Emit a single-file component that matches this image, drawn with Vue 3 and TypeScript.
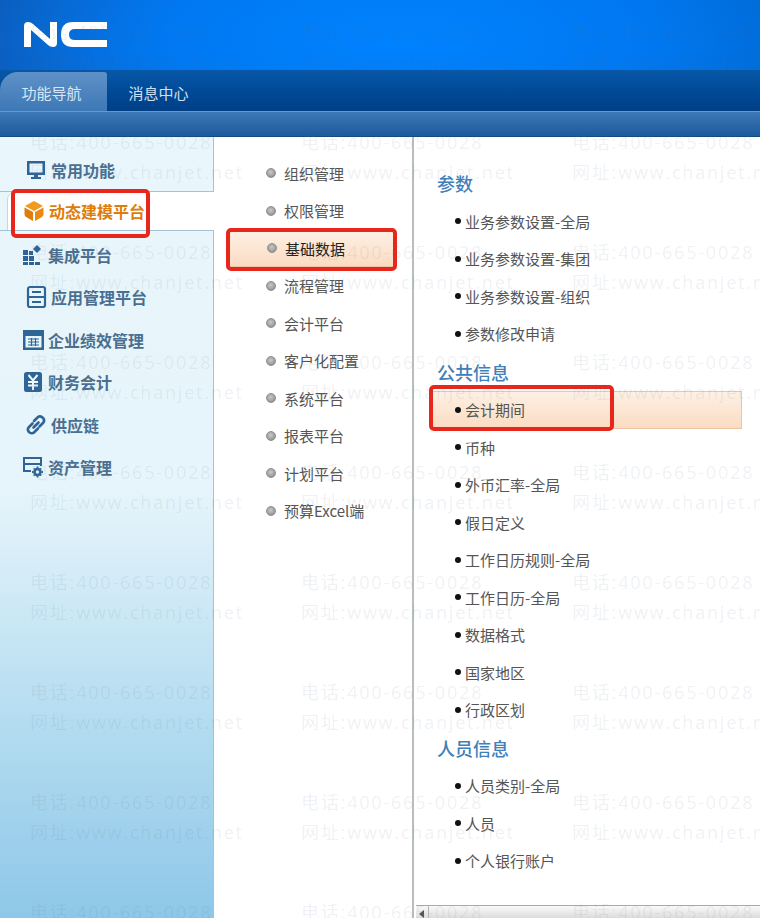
<script setup lang="ts">
interface SideItem {
  label: string
  icon: string
  active?: boolean
}

interface Group {
  title: string
  items: string[]
}

const sideItems: SideItem[] = [
  { label: '常用功能', icon: 'monitor' },
  { label: '动态建模平台', icon: 'cube', active: true },
  { label: '集成平台', icon: 'blocks' },
  { label: '应用管理平台', icon: 'server' },
  { label: '企业绩效管理', icon: 'calc' },
  { label: '财务会计', icon: 'yen' },
  { label: '供应链', icon: 'link' },
  { label: '资产管理', icon: 'asset' },
]

const midItems = ['组织管理', '权限管理', '基础数据', '流程管理', '会计平台', '客户化配置', '系统平台', '报表平台', '计划平台', '预算Excel端']

const groups: Group[] = [
  { title: '参数', items: ['业务参数设置-全局', '业务参数设置-集团', '业务参数设置-组织', '参数修改申请'] },
  {
    title: '公共信息',
    items: ['会计期间', '币种', '外币汇率-全局', '假日定义', '工作日历规则-全局', '工作日历-全局', '数据格式', '国家地区', '行政区划'],
  },
  { title: '人员信息', items: ['人员类别-全局', '人员', '个人银行账户'] },
]

const marks: number[] = [0, 1, 2, 3, 4, 5, 6, 7, 8]
const markCols: number[] = [0, 1, 2]
</script>

<template>
  <div class="page">
    <header class="top">
      <svg class="logo" width="84" height="28" viewBox="0 0 84 28">
        <path d="M1 27V6Q1 2 5 2Q8 2 10 4L27 19V2H34V23Q34 27 30 27Q27 27 25 25L8 10V27Z" fill="#fff" />
        <path d="M84 2H50Q38 2 38 14.500Q38 27 50 27H84V20H52Q46 20 46 14.500Q46 9 52 9H84Z" fill="#fff" />
      </svg>
    </header>

    <nav class="tabs">
      <div class="tab on">功能导航</div>
      <div class="tab">消息中心</div>
    </nav>
    <div class="subbar"></div>

    <main class="body">
      <aside class="side">
        <div v-for="item in sideItems" :key="item.label" class="side-item" :class="[item.icon, { active: item.active }]">
          <svg class="ico" width="24" height="24" viewBox="0 0 24 24">
            <g v-if="item.icon === 'monitor'" fill="#2f6596">
              <path d="M3 3H21V17H14V19H17V21H7V19H10V17H3ZM5.500 5.500V14.500H18.500V5.500Z" fill-rule="evenodd" />
            </g>
            <g v-else-if="item.icon === 'cube'">
              <path d="M12 2L21 7L12 12L3 7Z" fill="#f09a20" />
              <path d="M2.500 8.500L11 13V22L4 18Q2.500 17 2.500 15Z" fill="#dd7d0c" />
              <path d="M21.500 8.500L13 13V22L20 18Q21.500 17 21.500 15Z" fill="#e88a14" />
            </g>
            <g v-else-if="item.icon === 'blocks'" fill="#2f6596">
              <rect x="2" y="7" width="5" height="5" />
              <rect x="2" y="13" width="5" height="5" />
              <rect x="2" y="19" width="5" height="3" />
              <rect x="8" y="13" width="5" height="5" />
              <rect x="8" y="19" width="5" height="3" />
              <rect x="14" y="19" width="5" height="3" />
              <rect x="8" y="8" width="4" height="4" />
              <path d="M16 2L20 6L16 10L12 6Z" />
            </g>
            <g v-else-if="item.icon === 'server'" fill="none" stroke="#2f6596" stroke-width="2.200">
              <rect x="4" y="2" width="17" height="20" rx="2" />
              <path d="M4 12H21M8 7H17M8 17H17" />
            </g>
            <g v-else-if="item.icon === 'calc'">
              <path d="M2 2H23V22H2ZM4.500 8V19.500H20.500V8Z" fill="#2f6596" fill-rule="evenodd" />
              <path d="M7 11H18M7 14H18M7 17H18M10.500 10V18M14.500 10V18" stroke="#2f6596" stroke-width="1.200" />
            </g>
            <g v-else-if="item.icon === 'yen'">
              <rect x="3" y="2" width="18" height="20" rx="2.500" fill="#2f6596" />
              <path d="M7.500 5L12 10.500L16.500 5M7 12H17M7 15.500H17M12 10.500V20" fill="none" stroke="#eef8fd" stroke-width="2" />
            </g>
            <g v-else-if="item.icon === 'link'" fill="none" stroke="#2f6596" stroke-width="2.600" stroke-linecap="round">
              <path d="M10 8L14 4Q16 2.500 18.500 4.500L19.500 5.500Q21 8 19 10L15.500 13.500" />
              <path d="M14 15.500L10 19.500Q8 21 5.500 19.500L4.500 18.500Q3 16 5 14L8.500 10.500" />
              <path d="M9.500 14.500L14.500 9.500" />
            </g>
            <g v-else fill="none" stroke="#2f6596" stroke-width="2">
              <path d="M10 16H3V3H20V11M3 9H20" />
              <circle cx="16.500" cy="17" r="3" stroke-width="2.600" />
              <path d="M16.500 11.500V13M16.500 21V22.500M11 17H12.500M20.500 17H22M12.800 13.300L13.800 14.300M19.200 19.700L20.200 20.700M20.200 13.300L19.200 14.300M13.800 19.700L12.800 20.700" stroke-width="1.800" />
            </g>
          </svg>
          <span class="side-label">{{ item.label }}</span>
          <i v-if="item.active" class="note note-side"></i>
        </div>
      </aside>

      <section class="mid">
        <div v-for="(name, idx) in midItems" :key="name" class="mid-item" :class="{ active: idx === 2 }">
          <span class="dot"></span>
          <span>{{ name }}</span>
          <i v-if="idx === 2" class="note note-mid"></i>
        </div>
      </section>

      <section class="detail">
        <div v-for="group in groups" :key="group.title" class="group">
          <h3>{{ group.title }}</h3>
          <div v-for="name in group.items" :key="name" class="leaf" :class="{ active: name === '会计期间' }">
            <span class="bullet"></span>
            <span>{{ name }}</span>
            <i v-if="name === '会计期间'" class="note note-leaf"></i>
          </div>
        </div>
        <div class="hscroll"><span class="arrow"></span><span class="thumb"></span></div>
      </section>
    </main>

    <div class="marks">
      <template v-for="row in marks" :key="row">
        <div class="mark-row" :style="{ top: `${row * 110 + 17}px` }">
          <div v-for="col in markCols" :key="col" class="mark">
            <div>电话:400-665-0028</div>
            <div>网址:www.chanjet.net</div>
          </div>
        </div>
      </template>
    </div>
  </div>
</template>

<style scoped>
.page {
  position: relative;
  width: 760px;
  height: 918px;
  overflow: hidden;
  display: flex;
  flex-direction: column;
  background: #fff;
  font-family: "Noto Sans CJK SC", "Liberation Sans", sans-serif;
}

.top {
  height: 70px;
  flex: none;
  box-sizing: border-box;
  padding: 20px 0 0 23px;
  background: radial-gradient(ellipse 420px 150px at 400px 40px, #0082ff 0%, #0079f2 55%, rgba(0, 110, 225, 0) 100%), linear-gradient(90deg, #0b5dbd 0%, #0a66cf 25%, #0072e6 55%, #0068d2 100%);
}

.logo {
  display: block;
}

.tabs {
  height: 41px;
  flex: none;
  box-sizing: border-box;
  padding-top: 2px;
  display: flex;
  background: linear-gradient(180deg, #0858a8 0%, #004a98 50%, #003f86 100%);
}

.tab {
  width: 107px;
  display: flex;
  align-items: center;
  justify-content: center;
  font-size: 15px;
  color: #cfe0f2;
  box-sizing: border-box;
  padding-right: 4px;
  padding-top: 2px;
}

.tab.on {
  background: linear-gradient(180deg, #5f91c8 0%, #3d78b6 100%);
  border-top-left-radius: 18px;
  border-top-right-radius: 3px;
  color: #d8e6f5;
}

.subbar {
  height: 26px;
  flex: none;
  border-top: 1px solid #6a97c6;
  box-sizing: border-box;
  background: linear-gradient(180deg, #3d78b6 0%, #1c5a9c 100%);
  border-bottom: 1px solid #144a84;
}

.body {
  flex: 1;
  min-height: 0;
  display: flex;
}

.side {
  width: 214px;
  flex: none;
  box-sizing: border-box;
  padding-top: 12px;
  border-right: 1px solid #a5c3d6;
  background: linear-gradient(180deg, #e9f6fc 0%, #e6f5fb 45%, #b4dcf0 75%, #8ec7e8 100%);
}

.side-item {
  height: 42.500px;
  box-sizing: border-box;
  display: flex;
  align-items: center;
  gap: 3px;
  padding-left: 21px;
  font-size: 16px;
  font-weight: 700;
  color: #4a6f90;
}

.side-item.monitor {
  height: 43px;
  border-bottom: 1px solid #a5c3d6;
  padding-left: 24px;
  margin-right: -1px;
  border-right: 1px solid #a5c3d6;
}

.side-item.active {
  position: relative;
  height: 38px;
  margin: 0 -1px 0 7px;
  padding-left: 14px;
  background: #fff;
  border-top-left-radius: 8px;
  border-left: 1px solid #c9d6dd;
  color: #dd7d0c;
}

.side-item.blocks {
  height: 46px;
  border-top: 1px solid #a5c3d6;
  margin-right: -1px;
  border-right: 1px solid #a5c3d6;
  padding-top: 3px;
}

.side-item.server,
.side-item.link {
  padding-left: 24px;
}

.ico {
  flex: none;
}

.note {
  position: absolute;
  box-sizing: border-box;
  border: 4px solid #e8261c;
  border-radius: 5px;
  pointer-events: none;
}

.note-side {
  left: 3px;
  top: -3px;
  width: 139px;
  height: 49px;
}

.mid {
  width: 198px;
  flex: none;
  box-sizing: border-box;
  padding-top: 17.500px;
}

.mid-item {
  position: relative;
  height: 37.500px;
  box-sizing: border-box;
  display: flex;
  align-items: center;
  gap: 8px;
  padding-left: 52px;
  font-size: 15px;
  color: #555;
}

.mid-item.active {
  margin: 0 17px 0 14px;
  padding-left: 38px;
  background: linear-gradient(180deg, #fdf0e4 0%, #fbdcc2 100%);
  border: 1px solid #efc4a4;
  color: #222;
}

.note-mid {
  left: -3px;
  top: -3px;
  width: 171px;
  height: 43px;
}

.dot {
  width: 10px;
  height: 10px;
  border-radius: 50%;
  background: radial-gradient(circle at 45% 40%, #c8c8c8 0%, #a0a0a0 60%, #777 100%);
  border: 1px solid #8e8e8e;
  box-sizing: border-box;
}

.detail {
  position: relative;
  flex: 1;
  min-width: 0;
  box-sizing: border-box;
  padding-top: 28px;
  border-left: 2px solid #bcbcbc;
}

.group h3 {
  margin: 0;
  height: 37.500px;
  line-height: 37.500px;
  padding-left: 23px;
  font-size: 18px;
  font-weight: 500;
  color: #3f80ba;
}

.group + .group {
  margin-top: 1px;
}

.leaf {
  position: relative;
  height: 37.500px;
  box-sizing: border-box;
  display: flex;
  align-items: center;
  gap: 4px;
  padding-left: 41px;
  font-size: 15px;
  color: #555;
}

.leaf.active {
  margin: 0 18px 0 16px;
  padding-left: 24px;
  background: linear-gradient(180deg, #fdf0e4 0%, #fbdcc2 100%);
  border: 1px solid #efc4a4;
}

.note-leaf {
  left: -2px;
  top: -7px;
  width: 185px;
  height: 46px;
}

.bullet {
  width: 6px;
  height: 6px;
  border-radius: 50%;
  background: #111;
}

.hscroll {
  position: absolute;
  left: 2px;
  right: 0;
  bottom: 0;
  height: 12px;
  display: flex;
  border-top: 1px solid #a9a9a9;
  background: linear-gradient(180deg, #fafafa 0%, #dcdcdc 100%);
}

.arrow {
  width: 0;
  height: 0;
  margin: 4px 0 0 3px;
  border-style: solid;
  border-width: 4px 5px 4px 0;
  border-color: transparent #555 transparent transparent;
}

.thumb {
  margin-left: 4px;
  width: 1px;
  background: #b5b5b5;
}

.marks {
  position: absolute;
  inset: 0;
  pointer-events: none;
}

.mark-row {
  position: absolute;
  left: 30px;
  display: flex;
  gap: 68px;
}

.mark {
  width: 203px;
  font-size: 18px;
  line-height: 30px;
  letter-spacing: 1.800px;
  white-space: nowrap;
  color: rgba(90, 110, 130, 0.1);
  font-family: "Open Sans", "Noto Sans CJK SC", sans-serif;
}
</style>
